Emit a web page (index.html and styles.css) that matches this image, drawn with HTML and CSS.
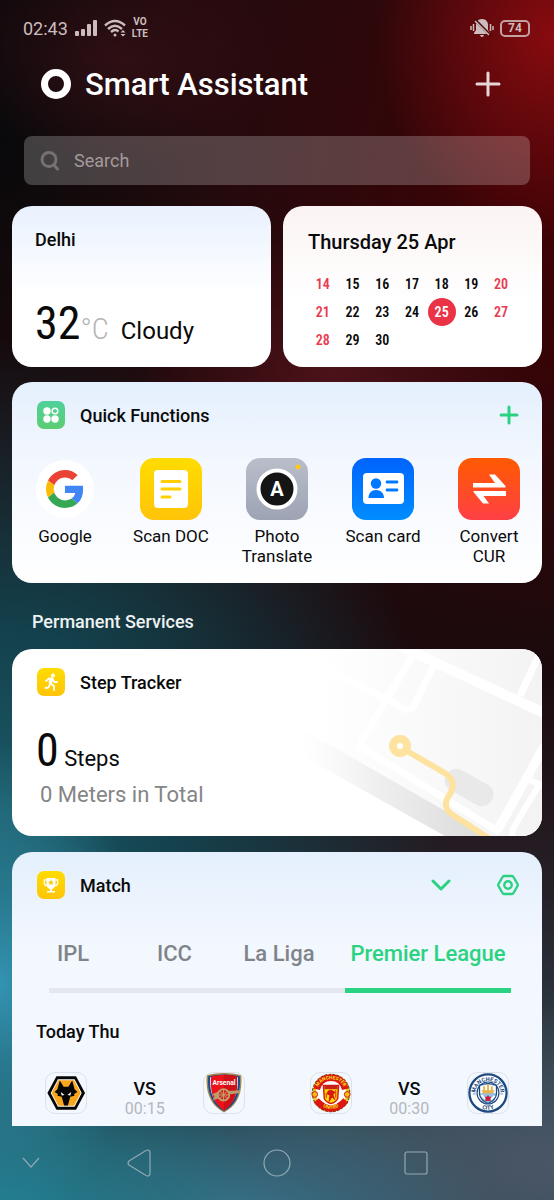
FILE: index.html
```html
<!DOCTYPE html>
<html lang="en">
<head>
    <meta charset="UTF-8">
    <meta name="viewport" content="width=device-width, initial-scale=1.0">
    <title>Smart Assistant</title>
    <link rel="stylesheet" href="styles.css">
</head>
<body>
    <div class="status-bar">
        <div class="status-left">
            <span class="clock">02:43</span>
            <svg width="24" height="18" viewBox="0 0 24 18" fill="currentColor">
                <rect x="1" y="12" width="4" height="5" rx="1"/>
                <rect x="7" y="10" width="4" height="7" rx="1"/>
                <rect x="13" y="5" width="4" height="12" rx="1"/>
                <rect x="19" y="1" width="4" height="16" rx="1"/>
            </svg>
            <svg width="22" height="18" viewBox="0 0 22 18" fill="none" stroke="currentColor" stroke-width="2.4">
                <path d="M1 6.500Q11 -2.500 21 6.500"/>
                <path d="M4 10Q11 3.500 18 10"/>
                <path d="M7 13Q11 9.500 14.500 12.500"/>
                <circle cx="11" cy="16" r="1.500" fill="currentColor" stroke="none"/>
                <path d="M16.500 13.500L19 11l2.500 2.500zM16.500 15L19 17.500l2.500-2.500z" fill="currentColor" stroke="none"/>
            </svg>
            <span class="volte">VO<br>LTE</span>
        </div>
        <div class="status-right">
            <svg width="24" height="20" viewBox="0 0 24 20" fill="currentColor">
                <path d="M12 1c4 0 6 3 6 6v5l2 3v1H4v-1l2-3V7c0-3 2-6 6-6zM10 17h4q-.5 2-2 2t-2-2z"/>
                <path d="M4 1l17 17" stroke="#4d0a0d" stroke-width="3"/>
                <path d="M5 3l14 14M1 8v4M3.500 6v7M23 8v4M20.500 6v7" stroke="currentColor" stroke-width="1.500"/>
            </svg>
            <span class="battery">74</span>
        </div>
    </div>

    <header class="header">
        <svg width="30" height="30" viewBox="0 0 30 30"><circle cx="15" cy="15" r="11.500" fill="none" stroke="#fff" stroke-width="7"/></svg>
        <h1>Smart Assistant</h1>
        <button class="icon-button" aria-label="Add card">
            <svg width="26" height="26" viewBox="0 0 26 26" stroke="#e6d6d6" stroke-width="3" stroke-linecap="round"><path d="M13 2v22M2 13h22"/></svg>
        </button>
    </header>

    <form class="search">
        <label for="search" aria-label="Search">
            <svg width="20" height="20" viewBox="0 0 20 20" fill="none" stroke="currentColor" stroke-width="3" stroke-linecap="round"><circle cx="9" cy="8.500" r="7"/><path d="M14 14l3.500 4"/></svg>
        </label>
        <input id="search" type="text" placeholder="Search">
    </form>

    <main class="cards">
        <div class="top-cards">
            <section class="card weather">
                <h2>Delhi</h2>
                <div class="weather-now">
                    <span class="big-number">32<span class="unit">°C</span></span>
                    <span class="condition">Cloudy</span>
                </div>
            </section>
            <section class="card calendar">
                <h2>Thursday 25 Apr</h2>
                <table>
                    <tr><td class="weekend">14</td><td>15</td><td>16</td><td>17</td><td>18</td><td>19</td><td class="weekend">20</td></tr>
                    <tr><td class="weekend">21</td><td>22</td><td>23</td><td>24</td><td><span class="today">25</span></td><td>26</td><td class="weekend">27</td></tr>
                    <tr><td class="weekend">28</td><td>29</td><td>30</td><td></td><td></td><td></td><td></td></tr>
                </table>
            </section>
        </div>

        <section class="card quick">
            <div class="card-head">
                <svg width="28" height="28" viewBox="0 0 28 28">
                    <defs><linearGradient id="green" x2="0" y2="1"><stop stop-color="#50d19b"/><stop offset="1" stop-color="#5bcd73"/></linearGradient></defs>
                    <rect width="28" height="28" rx="7" fill="url(#green)"/>
                    <g fill="#fff"><circle cx="10" cy="10" r="3.700"/><circle cx="10" cy="18" r="3.700"/><circle cx="18" cy="18" r="3.700"/></g>
                    <circle cx="18" cy="10" r="2.800" fill="none" stroke="#fff" stroke-width="1.500"/>
                </svg>
                <h2>Quick Functions</h2>
                <button class="icon-button green" aria-label="Add function">
                    <svg width="20" height="20" viewBox="0 0 20 20" stroke="currentColor" stroke-width="3" stroke-linecap="round"><path d="M10 2v16M2 10h16"/></svg>
                </button>
            </div>
            <div class="functions">
                <button class="function">
                    <svg width="62" height="62" viewBox="0 0 62 62">
                        <circle cx="31" cy="31" r="29" fill="#fff"/>
                        <g transform="translate(12 12) scale(.79)">
                            <path fill="#ea4335" d="M24 9.500c3.540 0 6.710 1.220 9.210 3.600l6.850-6.850C35.900 2.380 30.470 0 24 0 14.620 0 6.510 5.380 2.560 13.220l7.980 6.190C12.430 13.720 17.740 9.500 24 9.500z"/>
                            <path fill="#4285f4" d="M46.980 24.550c0-1.570-.15-3.090-.38-4.550H24v9.020h12.940c-.58 2.960-2.260 5.480-4.780 7.180l7.730 6c4.510-4.180 7.090-10.360 7.090-17.650z"/>
                            <path fill="#fbbc05" d="M10.530 28.590A14.500 14.500 0 0 1 9.770 24c0-1.600.27-3.140.76-4.590l-7.980-6.190A24 24 0 0 0 0 24c0 3.870.92 7.540 2.560 10.780z"/>
                            <path fill="#34a853" d="M24 48c6.480 0 11.930-2.130 15.890-5.810l-7.730-6c-2.150 1.450-4.920 2.300-8.160 2.300-6.260 0-11.570-4.220-13.470-9.910l-7.980 6.190C6.510 42.620 14.620 48 24 48z"/>
                        </g>
                    </svg>
                    Google
                </button>
                <button class="function">
                    <svg width="62" height="62" viewBox="0 0 62 62">
                        <defs><linearGradient id="yellow" x2="0" y2="1"><stop stop-color="#ffdc00"/><stop offset="1" stop-color="#ffc408"/></linearGradient></defs>
                        <rect width="62" height="62" rx="14" fill="url(#yellow)"/>
                        <rect x="14" y="12" width="34" height="38" rx="4" fill="#fff"/>
                        <path d="M22 23.500h18M22 31h18M22 39h8" stroke="#ffcf04" stroke-width="3" stroke-linecap="round"/>
                    </svg>
                    Scan DOC
                </button>
                <button class="function">
                    <svg width="62" height="62" viewBox="0 0 62 62">
                        <defs><linearGradient id="grey" x2="0" y2="1"><stop stop-color="#babecb"/><stop offset="1" stop-color="#9da3b3"/></linearGradient></defs>
                        <rect width="62" height="62" rx="14" fill="url(#grey)"/>
                        <circle cx="31" cy="31" r="18.500" fill="#151515" stroke="#fff" stroke-width="4"/>
                        <text x="31" y="38" class="letter">A</text>
                        <circle cx="52" cy="9" r="2.500" fill="#ffc91c"/>
                    </svg>
                    Photo Translate
                </button>
                <button class="function">
                    <svg width="62" height="62" viewBox="0 0 62 62">
                        <defs><linearGradient id="blue" x2="0" y2="1"><stop stop-color="#0063ff"/><stop offset="1" stop-color="#008dff"/></linearGradient></defs>
                        <rect width="62" height="62" rx="14" fill="url(#blue)"/>
                        <rect x="11" y="15" width="41" height="31" rx="4" fill="#fff"/>
                        <circle cx="24" cy="25.500" r="5.200" fill="#0078ff"/>
                        <path d="M16.500 40c0-5 3-8 7.500-8s8 3 8 8z" fill="#0078ff"/>
                        <path d="M35 24h10M35 32h10" stroke="#0078ff" stroke-width="2.800" stroke-linecap="round"/>
                    </svg>
                    Scan card
                </button>
                <button class="function">
                    <svg width="62" height="62" viewBox="0 0 62 62">
                        <defs><linearGradient id="orange" x2="0" y2="1"><stop stop-color="#ff5a00"/><stop offset="1" stop-color="#ff4046"/></linearGradient></defs>
                        <rect width="62" height="62" rx="14" fill="url(#orange)"/>
                        <path d="M15 25h22l-6-8.500h6L47.500 28v1.500H15zM48 38H25.500l5.500 7.500h-6L15.500 34v-1H48z" fill="#fff"/>
                    </svg>
                    Convert CUR
                </button>
            </div>
        </section>

        <h2 class="section-title">Permanent Services</h2>

        <section class="card steps">
            <svg class="map" width="262" height="187" viewBox="0 0 262 187" fill="none">
                <defs>
                    <linearGradient id="ground"><stop offset=".15" stop-color="#f3f3f3" stop-opacity="0"/><stop offset="1" stop-color="#f3f3f3"/></linearGradient>
                    <linearGradient id="river"><stop stop-color="#f4f4f4" stop-opacity="0"/><stop offset=".4" stop-color="#efefef"/><stop offset="1" stop-color="#dadada"/></linearGradient>
                </defs>
                <path d="M0 0h262v187h-54L0 68z" fill="url(#ground)"/>
                <path d="M22 80L209 187h-44L22 107z" fill="url(#river)"/>
                <g stroke="#fff">
                    <path d="M118-4L264 64" stroke-width="10"/>
                    <path d="M262-1l-22 48" stroke-width="7"/>
                    <path d="M133 6L81 93q-2 4 3 7l135 83" stroke-width="7"/>
                    <path d="M154 16l-20 40q-4 7-12 3l-15-9L28 12" stroke-width="7"/>
                    <path d="M265 96l-48 86" stroke-width="9"/>
                    <path d="M244 129l20 8M259 136l-25 42q-3 6-1 12" stroke-width="6"/>
                </g>
                <rect x="163" y="127" width="52" height="23" rx="11" fill="#e9e9e9" transform="rotate(29 189 139)"/>
                <path d="M127 102l36 21q14 8 8 20l-4 7q-4 10 6 16l49 32" stroke="#fde2a0" stroke-width="6"/>
                <circle cx="120" cy="97" r="7" fill="#fff" stroke="#fde2a0" stroke-width="8"/>
            </svg>
            <div class="card-head">
                <svg width="28" height="28" viewBox="0 0 28 28">
                    <rect width="28" height="28" rx="7" fill="url(#yellow)"/>
                    <circle cx="16" cy="7.500" r="2" fill="#fff"/>
                    <path d="M9 13l3-2.500h3.500l-2 5 3.500 2.500v4M13 16l-1.500 3.500-3 .5M15.500 11l1.500 3h3" fill="none" stroke="#fff" stroke-width="1.800" stroke-linecap="round" stroke-linejoin="round"/>
                    <path d="M12.500 10.500h3.500l-2 5.500-2.500-1z" fill="#fff"/>
                </svg>
                <h2>Step Tracker</h2>
            </div>
            <div class="step-count"><span class="big-number">0</span> Steps</div>
            <p class="meters">0 Meters in Total</p>
        </section>

        <section class="card match">
            <div class="card-head">
                <svg width="28" height="28" viewBox="0 0 28 28">
                    <rect width="28" height="28" rx="7" fill="url(#yellow)"/>
                    <path d="M9.500 7h9v6c0 3-2 4.500-3.500 5v2h3v1.500h-8V20h3v-2c-1.500-.5-3.500-2-3.500-5z" fill="#fff"/>
                    <path d="M9.500 9H7.300v3q0 2.500 2.700 2.800M18.500 9h2.200v3q0 2.500-2.700 2.800" fill="none" stroke="#fff" stroke-width="1.300"/>
                    <path d="M14 8.500l.9 2 2.100.2-1.600 1.400.5 2.100-1.900-1.100-1.900 1.100.5-2.100-1.600-1.400 2.100-.2z" fill="#ffca06"/>
                </svg>
                <h2>Match</h2>
                <button class="icon-button green" aria-label="Expand">
                    <svg width="20" height="20" viewBox="0 0 20 20" fill="none" stroke="currentColor" stroke-width="3" stroke-linecap="round" stroke-linejoin="round"><path d="M2 6l8 8 8-8"/></svg>
                </button>
                <button class="icon-button green settings" aria-label="Match settings">
                    <svg width="22" height="22" viewBox="0 0 22 22" fill="none" stroke="currentColor" stroke-width="2.400" stroke-linejoin="round"><path d="M7 2h8q1 0 1.500 1l4 7q.5 1 0 2l-4 7q-.5 1-1.500 1H7q-1 0-1.500-1l-4-7q-.5-1 0-2l4-7Q6 2 7 2z"/><circle cx="11" cy="11" r="3.700"/></svg>
                </button>
            </div>
            <nav class="tabs">
                <button>IPL</button>
                <button>ICC</button>
                <button>La Liga</button>
                <button class="active">Premier League</button>
            </nav>
            <h3>Today Thu</h3>
            <div class="fixtures">
                <div class="fixture">
                    <svg class="crest" viewBox="0 0 42 42" role="img" aria-label="Wolves">
                        <path d="M11 3.500h20.500L41 21l-9.500 17.500H11L1.500 21z" fill="#060606"/>
                        <path d="M12.500 6.500h17.500L37.500 21 30 35.500H12.500L5 21z" fill="#fff"/>
                        <path d="M13 7.500h16.500L36.500 21l-7 13.500H13L6 21z" fill="#faa61a"/>
                        <path d="M14.500 8l4 6.500h5l4-6.500 2.500 9 3 3-3.500 2 .5 2-4.500 1-2.500 9h-4l-2.500-9-4.500-1 .5-2-3.500-2 3-3z" fill="#060606"/>
                        <path d="M15.500 20l4 3-3 .5zM26.500 20l-4 3 3 .5z" fill="#fff"/>
                    </svg>
                    <div class="versus">VS<time>00:15</time></div>
                    <svg class="crest" viewBox="0 0 42 42" role="img" aria-label="Arsenal">
                        <path d="M3 2q18-4 36 0c2 20-5 33-18 39.500C8 35 1 22 3 2z" fill="#a38a50"/>
                        <path d="M4.500 3.500q16.500-4 33 0C39 22 33 34 21 40 9 34 3 21 4.500 3.500z" fill="#144a91"/>
                        <path d="M6.500 4.500Q21 1 35.500 4.500C36.500 22 31 32 21 38.500 11 32 5.500 22 6.500 4.500z" fill="#fff"/>
                        <path d="M7.500 3.500Q21 .5 34.500 3.500C36 21 32 32 21 39.500 10 32 6 21 7.500 3.500z" fill="#ed1119"/>
                        <path d="M21 1.800c5 0 10 .7 13.500 1.700C36 21 32 32 21 39.500z" fill="#cf1019"/>
                        <path d="M9 22l6-2.500 23-1.500v3l-12 1.500L9 29l2-4z" fill="#b99b68"/>
                        <circle cx="20.500" cy="23" r="6" fill="#d22b24" stroke="#c1a36e" stroke-width="1.800"/>
                        <path d="M14.500 23h12M20.500 17v12M16.500 19l8 8M24.500 19l-8 8" stroke="#c1a36e"/>
                        <text x="21" y="13" class="crest-arsenal">Arsenal</text>
                    </svg>
                </div>
                <div class="fixture">
                    <svg class="crest" viewBox="0 0 42 42" role="img" aria-label="Manchester United">
                        <defs>
                            <path id="united-top" d="M6.500 18Q9 6.500 21 6.500T35.500 18"/>
                            <path id="united-bottom" d="M5 29q16 17.500 32 0"/>
                        </defs>
                        <circle cx="21" cy="21" r="18.500" fill="#fff" stroke="#6f5a12" stroke-width="3.500" stroke-dasharray="3 1"/>
                        <circle cx="21" cy="21" r="17.500" fill="none" stroke="#edc512" stroke-width="3"/>
                        <path d="M6 17Q9 5 21 5t15 12M5.500 29q15.500 17 31 0" fill="none" stroke="#da1710" stroke-width="7"/>
                        <circle cx="4" cy="22.500" r="3" fill="#f4bd16" stroke="#cb1c12"/><circle cx="38" cy="22.500" r="3" fill="#f4bd16" stroke="#cb1c12"/>
                        <path d="M13 13h16l-1 14q-2 4-7 5-5-1-7-5z" fill="#fddc05" stroke="#d81710" stroke-width="1.500"/>
                        <path d="M14 13h14v4H14z" fill="#c7211a"/>
                        <path d="M18 19l3-1 4 2-2 3 2 5-3-3-3 5 1-7-3-1zM26 18v8M16 21v5" fill="#d81710" stroke="#d81710"/>
                        <text class="crest-united"><textPath href="#united-top" startOffset="50%">MANCHESTER</textPath></text>
                        <text class="crest-united"><textPath href="#united-bottom" startOffset="50%">UNITED</textPath></text>
                    </svg>
                    <div class="versus">VS<time>00:30</time></div>
                    <svg class="crest" viewBox="0 0 42 42" role="img" aria-label="Manchester City">
                        <defs>
                            <path id="city-top" d="M7.500 22a13.500 13.500 0 0 1 27 0"/>
                            <path id="city-bottom" d="M3.500 21a17.500 17.500 0 0 0 35 0"/>
                        </defs>
                        <circle cx="21" cy="21" r="19.500" fill="#fff" stroke="#1e4a80" stroke-width="2.400"/>
                        <circle cx="21" cy="21" r="11.500" fill="#fff" stroke="#1e4a80" stroke-width="1.200"/>
                        <path d="M12 13q9-4 18 0v9q-1 7-9 10-8-3-9-10z" fill="#95bfe5" stroke="#1e4a80" stroke-width="1.200"/>
                        <path d="M13 21v-7q8-3 16 0v7z" fill="#fff"/>
                        <path d="M14 18h14l-2 3.500H16zM16 14h2v4h-2zM20 12h2v6h-2zM24 14h2v4h-2z" fill="#e8b34c"/>
                        <path d="M14 23l4 4M24 28l4-4" stroke="#fff" stroke-width="2"/>
                        <path d="M21 23l1.200 2h2.300l-1.200 2.200.7 2.300h-6l.7-2.300-1.200-2.200h2.300z" fill="#c91f3e"/>
                        <path d="M5 22h3M34 22h3" stroke="#95bfe5" stroke-width="1.500"/>
                        <text class="crest-city"><textPath href="#city-top" startOffset="50%">MANCHESTER</textPath></text>
                        <text class="crest-city"><textPath href="#city-bottom" startOffset="50%">CITY</textPath></text>
                    </svg>
                </div>
            </div>
        </section>
    </main>

    <footer class="nav-bar">
        <button class="icon-button" aria-label="Hide bar"><svg width="18" height="12" viewBox="0 0 18 12"><path d="M1 1l8 9 8-9"/></svg></button>
        <button class="icon-button" aria-label="Back"><svg width="24" height="28" viewBox="0 0 24 28"><path d="M2 12Q0 14 2 16l17 10.500q3 1.500 4-1.500V3q-1-3-4-1.500z"/></svg></button>
        <button class="icon-button" aria-label="Home"><svg width="28" height="28" viewBox="0 0 28 28"><circle cx="14" cy="14" r="13"/></svg></button>
        <button class="icon-button" aria-label="Recent apps"><svg width="24" height="24" viewBox="0 0 24 24"><rect x="1" y="1" width="22" height="22" rx="2"/></svg></button>
    </footer>
</body>
</html>
```

FILE: styles.css
```css
* {
    box-sizing: border-box;
}
body {
    margin: 0;
    min-height: 100vh;
    display: flex;
    flex-direction: column;
    font-family: Roboto, sans-serif;
    font-size: 18px;
    color: #0a0a0a;
    background-color: #1c0b0e;
    background-image:
        radial-gradient(ellipse 32% 17% at 100% 3%, #880b0f 0%, rgba(120, 10, 14, 0.75) 40%, rgba(80, 6, 10, 0) 100%),
        radial-gradient(ellipse 30% 9% at 22% 5%, rgba(56, 17, 23, 0.7), rgba(56, 17, 23, 0)),
        radial-gradient(ellipse 26% 20% at 0% 82%, #3394b2 0%, rgba(47, 140, 165, 0.7) 35%, rgba(34, 100, 120, 0) 100%),
        radial-gradient(ellipse 50% 14% at 0% 102%, #208496, rgba(32, 110, 128, 0)),
        radial-gradient(ellipse 45% 11% at 45% 102%, #38718a, rgba(50, 95, 115, 0)),
        radial-gradient(ellipse 65% 14% at 100% 97%, #4a5666, rgba(64, 72, 88, 0)),
        radial-gradient(ellipse 80% 40% at 0% 68%, #1c5b69 0%, rgba(18, 70, 82, 0.9) 40%, rgba(16, 40, 48, 0) 100%),
        radial-gradient(ellipse 35% 12% at 60% 31%, #4c1219, rgba(60, 14, 20, 0)),
        radial-gradient(ellipse 60% 36% at 100% 18%, #400205, rgba(50, 3, 6, 0)),
        radial-gradient(ellipse 40% 35% at 0% 10%, #08090b, rgba(8, 9, 11, 0)),
        linear-gradient(#260a0d 0%, #21090c 40%, #1b0a0d 56%, #262027 74%, #304a54 95%);
}
h1, h2, h3, p {
    margin: 0;
    font-weight: 500;
}
h2, h3 {
    font-size: 18px;
    line-height: 24px;
}
svg {
    display: block;
    flex-shrink: 0;
}
button {
    font-family: inherit;
    background: none;
    border: none;
    padding: 0;
    color: inherit;
    cursor: pointer;
}
.green {
    color: #2bd281;
}
.status-bar {
    display: flex;
    justify-content: space-between;
    align-items: center;
    height: 56px;
    padding: 0 24px 0 23px;
    color: #cdbcbd;
}
.status-left, .status-right {
    display: flex;
    align-items: center;
    gap: 6px;
}
.volte {
    font-size: 10px;
    line-height: 12px;
    font-weight: 700;
    text-align: center;
}
.battery {
    width: 30px;
    height: 17px;
    border: 2px solid #c3a0a1;
    border-radius: 5px;
    font-size: 12px;
    line-height: 13px;
    font-weight: 700;
    text-align: center;
}
.header {
    display: flex;
    align-items: center;
    height: 56px;
    padding: 0 53px 0 41px;
    color: #fff;
}
.header h1 {
    flex: 1;
    margin-left: 14px;
    font-size: 31px;
}
.search {
    display: flex;
    align-items: center;
    gap: 14px;
    height: 49px;
    margin: 24px 24px 21px;
    padding: 0 16px;
    border-radius: 8px;
    background-color: rgba(255, 255, 255, 0.22);
    color: #777072;
}
.search input {
    flex: 1;
    min-width: 0;
    padding: 0;
    border: none;
    outline: none;
    background: none;
    font-family: inherit;
    font-size: 18px;
    color: #fff;
}
.search input::placeholder {
    color: #a39a9c;
}
.cards {
    flex: 1;
    padding: 0 12px;
}
.card {
    border-radius: 20px;
    background: linear-gradient(#e4f0fd, #f3f7fe 40%, #fff);
}
.top-cards {
    display: grid;
    grid-template-columns: 1fr 1fr;
    gap: 12px;
    margin-bottom: 15px;
}
.weather {
    display: flex;
    flex-direction: column;
    justify-content: space-between;
    padding: 22px 23px 15px;
    background: linear-gradient(#e9f1fe, #fff 55%);
}
.weather-now {
    display: flex;
    align-items: baseline;
    gap: 12px;
}
.big-number {
    font-family: "Roboto Condensed", Roboto, sans-serif;
    font-size: 46px;
    line-height: 46px;
}
.unit {
    font-size: 30px;
    font-weight: 300;
    color: #b5b5b5;
}
.condition {
    font-size: 24px;
}
.calendar {
    padding: 24px 26px 13px 25px;
    background: linear-gradient(#fbf3f3, #fff 60%);
}
.calendar h2 {
    font-size: 20px;
    margin-bottom: 16px;
}
.calendar table {
    width: 100%;
    table-layout: fixed;
    border-collapse: collapse;
    font-family: "Roboto Condensed", Roboto, sans-serif;
    font-size: 14px;
    font-weight: 600;
    text-align: center;
}
.calendar td {
    height: 28px;
    padding: 0;
}
.calendar .weekend {
    color: #ea3a50;
}
.today {
    display: block;
    width: 28px;
    margin: 0 auto;
    line-height: 28px;
    border-radius: 50%;
    background-color: #ea3347;
    color: #fff;
}
.card-head {
    display: flex;
    align-items: center;
    padding: 19px 23px 0 25px;
}
.card-head h2 {
    flex: 1;
    margin-left: 15px;
    padding-top: 2px;
}
.settings {
    margin-left: 46px;
}
.functions {
    display: grid;
    grid-template-columns: repeat(5, 1fr);
    padding: 29px 0 17px;
}
.function {
    display: flex;
    flex-direction: column;
    align-items: center;
    gap: 6px;
    padding: 0 12px;
    font-size: 17px;
    line-height: 20px;
    white-space: nowrap;
}
.function:nth-child(3), .function:nth-child(5) {
    white-space: normal;
}
.letter {
    font-size: 20px;
    font-weight: 700;
    text-anchor: middle;
    fill: #fff;
}
.section-title {
    padding: 27px 20px 15px;
    color: #eef2f3;
}
.steps {
    position: relative;
    overflow: hidden;
    margin-bottom: 16px;
    padding-bottom: 28px;
    background: #fff;
}
.map {
    position: absolute;
    top: 0;
    right: 0;
}
.steps .card-head, .step-count, .meters {
    position: relative;
}
.step-count {
    padding: 31px 24px 0;
    font-size: 22px;
}
.meters {
    margin-top: 9px;
    padding-left: 28px;
    font-size: 22px;
    line-height: 26px;
    font-weight: 400;
    color: #858585;
}
.match {
    border-radius: 20px 20px 0 0;
    background: linear-gradient(#e4f0fd, #f3f7fe 35%);
    padding-bottom: 7px;
}
.tabs {
    display: grid;
    grid-template-columns: 87fr 77fr 132fr 166fr;
    margin: 30px 31px 27px 37px;
}
.tabs button {
    height: 64px;
    padding-bottom: 11px;
    border-bottom: 5px solid #e4e7ef;
    font-size: 22px;
    font-weight: 500;
    color: #808489;
    white-space: nowrap;
}
.tabs button:first-child {
    padding-left: 8px;
    text-align: left;
}
.tabs .active {
    color: #2bd281;
    border-color: #2bd281;
}
.match h3 {
    padding-left: 24px;
}
.fixtures {
    display: grid;
    grid-template-columns: 1fr 1fr;
    gap: 65px;
    padding: 28px 33px 0;
}
.fixture {
    display: flex;
    justify-content: space-between;
    align-items: flex-start;
}
.crest {
    width: 42px;
    height: 42px;
    border: 1px solid #dce1ec;
    border-radius: 10px;
}
.versus {
    padding-top: 7px;
    text-align: center;
    font-weight: 500;
    line-height: 20px;
}
.versus time {
    display: block;
    font-size: 16px;
    font-weight: 400;
    color: #b4b7bd;
}
.crest text {
    font-weight: 700;
    text-anchor: middle;
}
.crest-arsenal {
    font-size: 7px;
    fill: #fff;
}
.crest-united {
    font-size: 5px;
    fill: #fce51c;
}
.crest-city {
    font-size: 6px;
    fill: #1e4a80;
}
.nav-bar {
    display: grid;
    grid-template-columns: 61fr 155fr 122fr 155fr 61fr;
    align-items: center;
    height: 74px;
}
.nav-bar button {
    display: flex;
    justify-content: center;
}
.nav-bar svg {
    fill: none;
    stroke: #8fa9b3;
    stroke-width: 1.2;
}
```
